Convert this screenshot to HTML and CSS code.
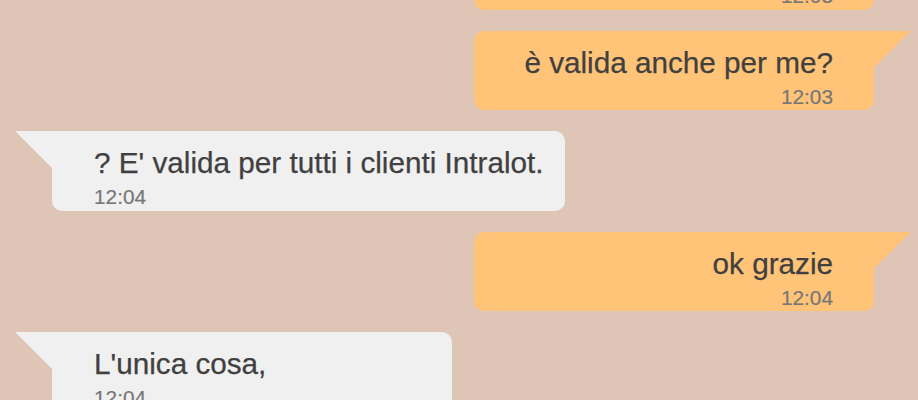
FILE: index.html
```html
<!DOCTYPE html>
<html lang="it">
<head>
    <meta charset="UTF-8">
    <meta name="viewport" content="width=device-width, initial-scale=1.0">
    <title>Chat</title>
    <link rel="stylesheet" href="styles.css">
</head>
<body>
    <div class="chat">
        <div class="message out">
            <div class="text">ok</div>
            <div class="time">12:03</div>
        </div>

        <div class="message out">
            <div class="text">è valida anche per me?</div>
            <div class="time">12:03</div>
        </div>

        <div class="message in">
            <div class="text">? E' valida per tutti i clienti Intralot.</div>
            <div class="time">12:04</div>
        </div>

        <div class="message out">
            <div class="text">ok grazie</div>
            <div class="time">12:04</div>
        </div>

        <div class="message in">
            <div class="text">L'unica cosa,</div>
            <div class="time">12:04</div>
        </div>
    </div>
</body>
</html>
```

FILE: styles.css
```css
body {
    margin: 0;
    padding: 0;
    background-color: #dfc5b5;
    font-family: "Liberation Sans", Arial, sans-serif;
    color: #404040;
    overflow: hidden;
}

.chat {
    display: flex;
    flex-direction: column;
    gap: 21px;
    margin-top: -70px;
}

.message {
    position: relative;
    box-sizing: border-box;
    min-width: 400px;
    max-width: 80%;
    padding: 15px 21px 1.5px 21px;
    border-radius: 10px;
}

.message::before {
    content: "";
    position: absolute;
    top: 0;
    width: 38px;
    height: 38px;
}

.message .text {
    font-size: 29.7px;
    line-height: 34px;
    white-space: nowrap;
    -webkit-text-stroke: 0.25px #404040;
}

.message .time {
    margin-top: 5px;
    font-size: 20.8px;
    line-height: 24px;
    color: #777;
    -webkit-text-stroke: 0.2px #777;
}

.out {
    align-self: flex-end;
    margin-right: 44px;
    padding-right: 41px;
    text-align: right;
    background-color: #ffc477;
    border-top-right-radius: 0;
}

.out::before {
    right: -37px;
    background-color: #ffc477;
    clip-path: polygon(0 0, 100% 0, 0 100%);
}

.in {
    align-self: flex-start;
    margin-left: 52px;
    padding-left: 42px;
    text-align: left;
    background-color: #f0f0f0;
    border-top-left-radius: 0;
}

.in::before {
    left: -37px;
    background-color: #f0f0f0;
    clip-path: polygon(0 0, 100% 0, 100% 100%);
}
```
